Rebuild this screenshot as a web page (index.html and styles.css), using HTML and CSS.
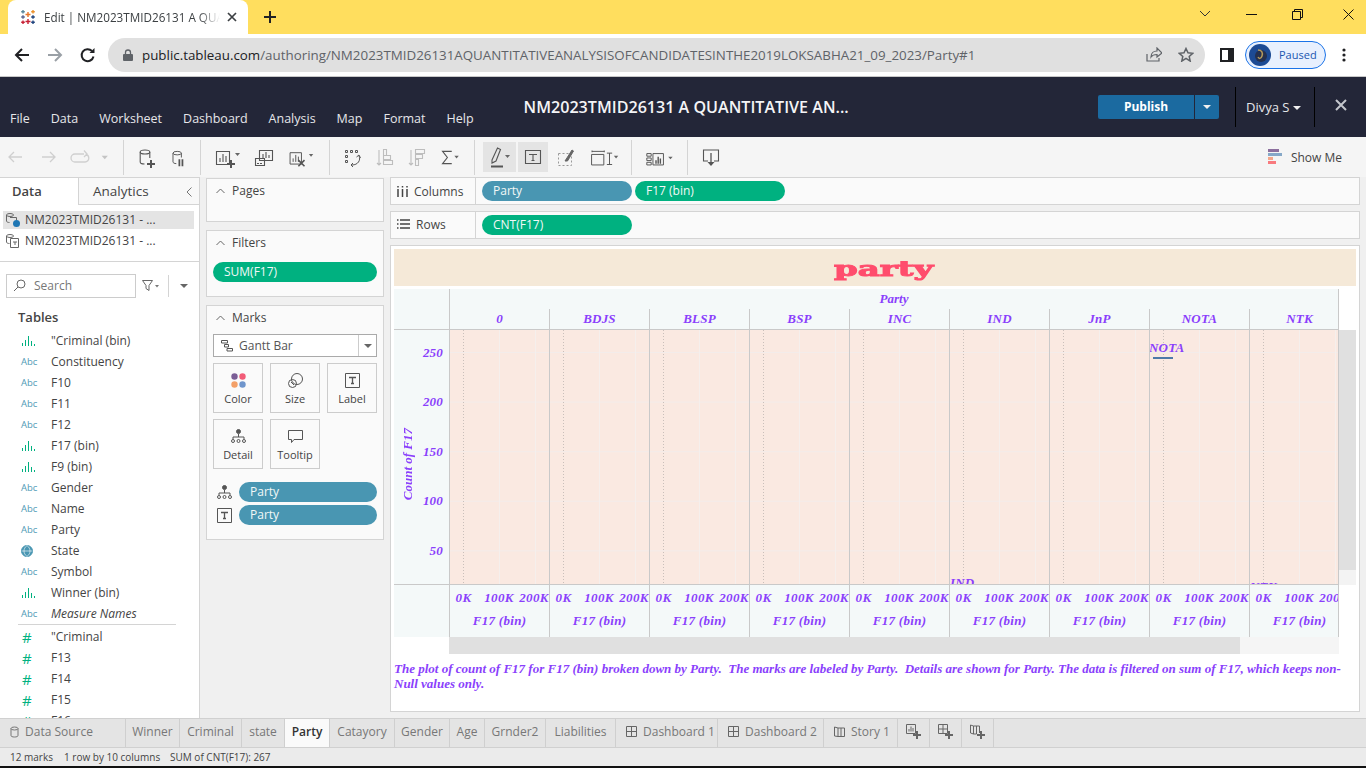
FILE: index.html
```html
<!DOCTYPE html>
<html lang="en">
<head>
    <meta charset="UTF-8">
    <meta name="viewport" content="width=device-width, initial-scale=1.0">
    <title>Edit | NM2023TMID26131</title>
    <link rel="stylesheet" href="styles.css">
</head>
<body>
    <!-- browser chrome -->
    <div class="tabstrip">
        <div class="tab">
            <svg class="favicon" width="16" height="16" viewBox="0 0 16 16" fill="none" stroke-width="1.4">
                <path d="M8 3v5M5.5 5.5h5" stroke="#e8762b"/>
                <path d="M3 1v3.5M1.2 2.700h3.600" stroke="#59879b"/>
                <path d="M13 1v3.5M11.2 2.700h3.600" stroke="#eb912b"/>
                <path d="M3 6.300v3.500M1.200 8h3.600" stroke="#5b6591"/>
                <path d="M13 6.300v3.500M11.200 8h3.600" stroke="#1f447e"/>
                <path d="M8 10v5M5.500 12.500h5" stroke="#c72035"/>
                <path d="M3 11.500v3.500M1.200 13.200h3.600" stroke="#c72035"/>
                <path d="M13 11.500v3.500M11.200 13.200h3.600" stroke="#1f447e"/>
            </svg>
            <span class="tab-title">Edit | NM2023TMID26131 A QUANTITATIVE</span>
            <svg class="tab-close" width="10" height="10" viewBox="0 0 10 10" stroke="#3c4043" stroke-width="1.7"><path d="M1 1l8 8M9 1l-8 8"/></svg>
        </div>
        <svg class="new-tab" width="12" height="12" viewBox="0 0 12 12" stroke="#202124" stroke-width="2"><path d="M6 0v12M0 6h12"/></svg>
        <div class="win-btns">
            <svg width="12" height="8" viewBox="0 0 12 8" fill="none" stroke="#333"><path d="M1 1l5 5 5-5"/></svg>
            <svg width="11" height="11" viewBox="0 0 11 11" stroke="#111"><path d="M0 5.500h11"/></svg>
            <svg width="11" height="11" viewBox="0 0 11 11" fill="none" stroke="#111"><path d="M.5 2.500h8v8h-8zM2.500 2.500v-2h8v8h-2"/></svg>
            <svg width="11" height="11" viewBox="0 0 11 11" stroke="#111"><path d="M.5.500l10 10M10.500.500l-10 10"/></svg>
        </div>
    </div>

    <div class="addrbar">
        <svg class="nav-icon" width="16" height="16" viewBox="0 0 16 16" fill="none" stroke="#202124" stroke-width="2"><path d="M15 8H2M8 2L2 8l6 6"/></svg>
        <svg class="nav-icon" width="16" height="16" viewBox="0 0 16 16" fill="none" stroke="#9aa0a6" stroke-width="2"><path d="M1 8h13M8 2l6 6-6 6"/></svg>
        <svg class="nav-icon" width="16" height="16" viewBox="0 0 16 16" fill="none" stroke="#202124" stroke-width="2"><path d="M13.500 9.500A6 6 0 1 1 12 4"/><path d="M14.500 1v5h-5z" fill="#202124" stroke="none"/></svg>
        <div class="omnibox">
            <svg width="10" height="12" viewBox="0 0 10 12" fill="#5f6368"><path d="M1 5h8a1 1 0 0 1 1 1v5a1 1 0 0 1-1 1H1a1 1 0 0 1-1-1V6a1 1 0 0 1 1-1z"/><path d="M2.500 5V3.500a2.500 2.500 0 0 1 5 0V5" fill="none" stroke="#5f6368" stroke-width="1.300"/></svg>
            <span class="url"><b>public.tableau.com</b>/authoring/NM2023TMID26131AQUANTITATIVEANALYSISOFCANDIDATESINTHE2019LOKSABHA21_09_2023/Party#1</span>
            <svg class="share" width="16" height="15" viewBox="0 0 16 15" fill="none" stroke="#5f6368" stroke-width="1.200"><path d="M1 7v7h12v-3"/><path d="M5 10c0-4 3-6 6-6V1l5 5-5 4V7.500c-3 0-5 1-6 2.500z"/></svg>
            <svg class="star" width="16" height="15" viewBox="0 0 16 15" fill="none" stroke="#5f6368" stroke-width="1.500"><path d="M8 1.500l2 4.300 4.700.500-3.500 3.200 1 4.600L8 11.300l-4.200 2.800 1-4.600L1.300 6.300 6 5.800z"/></svg>
        </div>
        <svg class="side-panel" width="14" height="14" viewBox="0 0 14 14"><path d="M0 0h14v14H0z" fill="#202124"/><path d="M2 2h6v10H2z" fill="#fff"/></svg>
        <div class="profile">
            <svg width="22" height="22" viewBox="0 0 22 22"><circle cx="11" cy="11" r="11" fill="#1c4a94"/><circle cx="12" cy="12" r="6" fill="#24304f"/><path d="M9 6c4 0 5 3 4 6s-3 3-4 1" fill="none" stroke="#b59a5a" stroke-width="1.500"/></svg>
            <span>Paused</span>
        </div>
        <svg class="kebab" width="4" height="14" viewBox="0 0 4 14" fill="#202124"><circle cx="2" cy="2" r="1.600"/><circle cx="2" cy="7" r="1.600"/><circle cx="2" cy="12" r="1.600"/></svg>
    </div>

    <!-- tableau header -->
    <header class="hdr">
        <nav class="menu">
            <span>File</span><span>Data</span><span>Worksheet</span><span>Dashboard</span><span>Analysis</span><span>Map</span><span>Format</span><span>Help</span>
        </nav>
        <div class="wb-title">NM2023TMID26131 A QUANTITATIVE AN...</div>
        <div class="hdr-right">
            <div class="publish"><span class="publish-main">Publish</span><span class="publish-caret"><i class="caret caret-white"></i></span></div>
            <div class="user">Divya S <i class="caret caret-white"></i></div>
            <svg class="hdr-close" width="12" height="12" viewBox="0 0 12 12" stroke="#c4c6cc" stroke-width="2"><path d="M1 1l10 10M11 1L1 11"/></svg>
        </div>
    </header>

    <!-- toolbar -->
    <div class="tools">
        <svg width="33" height="40" viewBox="0 0 33 40" fill="none" stroke="#cfcfcf" stroke-width="1.300"><path d="M22 20H9M14 15l-5 5 5 5"/></svg>
        <svg width="31" height="40" viewBox="0 0 31 40" fill="none" stroke="#cfcfcf" stroke-width="1.300"><path d="M9 20h13M17 15l5 5-5 5"/></svg>
        <svg width="33" height="40" viewBox="0 0 33 40" fill="none" stroke="#cfcfcf" stroke-width="1.300"><path d="M20 17h-9a3.800 3.800 0 0 0 0 8h10a3.800 3.800 0 0 0 3.800-4c0-1.500-1-3-2.800-3.500M20 13.500l3 3.500-3 3"/></svg>
        <svg class="group-end" width="27" height="40" viewBox="0 0 27 40" fill="#c4c4c4"><path d="M4 18h7l-3.500 4z"/></svg>

        <svg width="40" height="40" viewBox="0 0 40 40" fill="none" stroke="#555" stroke-width="1.100"><ellipse cx="21" cy="15" rx="4.800" ry="2"/><path d="M16.200 15v10c0 1 1.500 2 4.300 2M25.800 15v6"/><path d="M27 23v8M23 27h8" stroke-width="2"/></svg>
        <svg class="group-end" width="37" height="40" viewBox="0 0 37 40" fill="none" stroke="#555" stroke-width="1.100"><ellipse cx="13" cy="15" rx="4.800" ry="2"/><path d="M8.200 15v10c0 1 1.500 2 3.800 2M17.800 15v5"/><path d="M15.500 22v8M19 22v8" stroke-width="2"/></svg>

        <svg width="45" height="40" viewBox="0 0 45 40" fill="none" stroke="#555" stroke-width="1.100"><path d="M15.500 14.500h13v13h-13zM19 25v-4M22 25v-8M25 25v-6"/><path d="M30 23v8M26 27h8" stroke-width="2"/><path d="M34 16h5l-2.500 3z" fill="#666" stroke="none"/></svg>
        <svg width="34" height="40" viewBox="0 0 34 40" fill="none" stroke="#555" stroke-width="1.100"><path d="M13.500 13.500h13v10h-13zM9.500 21.500h9v7h-9zM17 21v-4M20 21v-6M23 21v-3"/><path d="M12 26v1M15 26v1" stroke-width="2"/></svg>
        <svg class="group-end" width="50" height="40" viewBox="0 0 50 40" fill="none" stroke="#555" stroke-width="1.100"><path d="M8.500 14.500h13v13h-13zM12 25v-4M15 25v-8M18 25v-6"/><path d="M18 23l7 7M25 23l-7 7" stroke-width="1.800"/><path d="M30 16h5l-2.500 3z" fill="#666" stroke="none"/></svg>

        <svg width="38" height="40" viewBox="0 0 38 40" fill="none" stroke="#555" stroke-width="1"><path d="M15.500 13.500h2v2h-2zM20.500 13.500h2v2h-2zM25.500 13.500h2v2h-2zM15.500 18.500h2v2h-2zM15.500 23.500h2v2h-2z"/><path d="M29 19c2 4-1 9-7 9M30.500 21l-1.500-3-2.500 2M23 26l-2 2 2 2"/></svg>
        <svg width="32" height="40" viewBox="0 0 32 40" fill="none" stroke="#bdbdbd" stroke-width="1.100"><path d="M11 13v15M9 26l2 2 2-2"/><path d="M15.500 12.500h3v6h-3zM15.500 18.500h7v4h-7zM15.500 23.500h9v4h-9z"/></svg>
        <svg width="33" height="40" viewBox="0 0 33 40" fill="none" stroke="#bdbdbd" stroke-width="1.100"><path d="M11 13v15M9 26l2 2 2-2"/><path d="M15.500 12.500h9v4h-9zM15.500 17.500h7v4h-7zM15.500 22.500h3v6h-3z"/></svg>
        <svg class="group-end" width="42" height="40" viewBox="0 0 42 40" fill="none" stroke="#555" stroke-width="1.300"><path d="M19 13H8.500l5.500 7-5.500 7H19"/><path d="M22 18h5l-2.500 3z" fill="#666" stroke="none"/></svg>

        <span class="tool-on first-on">
            <svg width="33" height="30" viewBox="0 0 33 30" fill="none" stroke="#555" stroke-width="1.100"><path d="M9 18l5.500-12 3 1.500L13 19l-4 2z"/><path d="M8 24.500h12" stroke-width="2"/><path d="M22 13h5l-2.500 3z" fill="#666" stroke="none"/></svg>
        </span>
        <span class="tool-on">
            <svg width="30" height="30" viewBox="0 0 30 30" fill="none" stroke="#555" stroke-width="1.100"><path d="M7.500 8.500h15v13h-15z"/><path d="M11 12.500h8M15 12.500v6M13.500 18.500h3"/></svg>
        </span>
        <svg width="40" height="40" viewBox="0 0 40 40" fill="none" stroke="#999"><path d="M10.500 16.500h13v12h-13z" stroke-dasharray="2 2"/><path d="M17 24l7-11 1.500 1-6 10z" fill="#666" stroke="#666"/></svg>
        <svg class="group-end" width="44" height="40" viewBox="0 0 44 40" fill="none" stroke="#555" stroke-width="1.100"><path d="M2 14v-2M2 13h14M16 14v-2M1.500 16.500h14v12h-14zM19 15h6M22 15v13M19 28h6"/><path d="M27 18h5l-2.500 3z" fill="#666" stroke="none"/></svg>

        <svg class="group-end" width="56" height="40" viewBox="0 0 56 40" fill="none" stroke="#555" stroke-width="1.100"><path d="M13.500 15.500h5v3h-5zM13.500 20.500h5v3h-5zM13.500 25.500h5v3h-5zM20.500 15.500h12v13h-12z"/><path d="M24 27v-4M26.500 27v-8M29 27v-6" stroke-width="1.600"/><path d="M38 19h5l-2.500 3z" fill="#666" stroke="none"/></svg>

        <svg width="40" height="40" viewBox="0 0 40 40" fill="none" stroke="#555" stroke-width="1.100"><path d="M20 24h-4.500v-11h15v11H26"/><path d="M23 16v12" stroke-width="1.300"/><path d="M19.500 25l3.500 4 3.500-4z" fill="#555" stroke="none"/></svg>

        <div class="show-me">
            <svg width="14" height="16" viewBox="0 0 14 16"><path d="M0 0h11v3H0z" fill="#8c6f9e"/><path d="M0 4h14v3H0z" fill="#86a8c8"/><path d="M0 8h5v3H0z" fill="#f3a68a"/><path d="M0 12h8v3H0z" fill="#f87a7e"/></svg>
            <span>Show Me</span>
        </div>
    </div>

    <div class="main">
        <!-- data pane -->
        <aside class="data-pane">
            <div class="pane-tabs">
                <div class="pane-tab active">Data</div>
                <div class="pane-tab">Analytics<svg class="collapse" width="6" height="10" viewBox="0 0 6 10" fill="none" stroke="#777"><path d="M5.500.500L1 5l4.500 4.500"/></svg></div>
            </div>
            <div class="sources">
                <div class="source on">
                    <svg width="16" height="16" viewBox="0 0 16 16" fill="none" stroke="#666"><ellipse cx="5" cy="3" rx="3.500" ry="1.500"/><path d="M1.500 3v6c0 1 1.500 1.500 3 1.500M5 5.500h6.500v3"/><circle cx="11.500" cy="11.500" r="3.500" fill="#1f77b4" stroke="none"/></svg>
                    <span>NM2023TMID26131 - ...</span>
                </div>
                <div class="source">
                    <svg width="16" height="16" viewBox="0 0 16 16" fill="none" stroke="#666"><ellipse cx="5" cy="3" rx="3.500" ry="1.500"/><path d="M1.500 3v6c0 1 1.500 1.500 3 1.500M5.500 5.500h8v9h-8zM8 9h4M10 9v3"/></svg>
                    <span>NM2023TMID26131 - ...</span>
                </div>
            </div>
            <div class="search-row">
                <div class="search">
                    <svg width="13" height="13" viewBox="0 0 13 13" fill="none" stroke="#666"><circle cx="8" cy="5" r="4"/><path d="M5 8l-4 4"/></svg>
                    <span>Search</span>
                </div>
                <svg class="funnel" width="18" height="12" viewBox="0 0 18 12" fill="none" stroke="#666"><path d="M.500.500h10L7 5.500v5l-3-2v-3z"/><path d="M13 5h4l-2 2.500z" fill="#777" stroke="none"/></svg>
                <i class="search-sep"></i>
                <i class="caret caret-grey"></i>
            </div>
            <div class="tables-title">Tables</div>
            <ul class="fields">
                <li><svg class="bars" width="14" height="10" viewBox="0 0 14 10" stroke="#00b180"><path d="M1.500 10V7M4.500 10V4M7.500 10V0M10.500 10V5M13.500 10V8"/></svg><span>"Criminal (bin)</span></li>
                <li><em class="abc">Abc</em><span>Constituency</span></li>
                <li><em class="abc">Abc</em><span>F10</span></li>
                <li><em class="abc">Abc</em><span>F11</span></li>
                <li><em class="abc">Abc</em><span>F12</span></li>
                <li><svg class="bars" width="14" height="10" viewBox="0 0 14 10" stroke="#00b180"><path d="M1.500 10V7M4.500 10V4M7.500 10V0M10.500 10V5M13.500 10V8"/></svg><span>F17 (bin)</span></li>
                <li><svg class="bars" width="14" height="10" viewBox="0 0 14 10" stroke="#00b180"><path d="M1.500 10V7M4.500 10V4M7.500 10V0M10.500 10V5M13.500 10V8"/></svg><span>F9 (bin)</span></li>
                <li><em class="abc">Abc</em><span>Gender</span></li>
                <li><em class="abc">Abc</em><span>Name</span></li>
                <li><em class="abc">Abc</em><span>Party</span></li>
                <li><svg class="bars globe" width="12" height="12" viewBox="0 0 12 12" fill="none" stroke="#4996b2"><circle cx="6" cy="6" r="5.500" fill="#4996b2"/><path d="M.500 6h11M6 .500c-4 3-4 8 0 11M6 .500c4 3 4 8 0 11" stroke="#fff" stroke-width=".6"/></svg><span>State</span></li>
                <li><em class="abc">Abc</em><span>Symbol</span></li>
                <li><svg class="bars" width="14" height="10" viewBox="0 0 14 10" stroke="#00b180"><path d="M1.500 10V7M4.500 10V4M7.500 10V0M10.500 10V5M13.500 10V8"/></svg><span>Winner (bin)</span></li>
                <li class="measure-names"><em class="abc">Abc</em><span>Measure Names</span></li>
                <li class="num"><em class="hash">#</em><span>"Criminal</span></li>
                <li><em class="hash">#</em><span>F13</span></li>
                <li><em class="hash">#</em><span>F14</span></li>
                <li><em class="hash">#</em><span>F15</span></li>
                <li><em class="hash">#</em><span>F16</span></li>
            </ul>
        </aside>

        <!-- pages, filters, marks -->
        <section class="cards">
            <div class="card card-pages">
                <div class="card-title"><svg width="9" height="6" viewBox="0 0 9 6" fill="none" stroke="#666"><path d="M.500 5L4.500 1l4 4"/></svg>Pages</div>
            </div>
            <div class="card card-filters">
                <div class="card-title"><svg width="9" height="6" viewBox="0 0 9 6" fill="none" stroke="#666"><path d="M.500 5L4.500 1l4 4"/></svg>Filters</div>
                <div class="pill green">SUM(F17)</div>
            </div>
            <div class="card card-marks">
                <div class="card-title"><svg width="9" height="6" viewBox="0 0 9 6" fill="none" stroke="#666"><path d="M.500 5L4.500 1l4 4"/></svg>Marks</div>
                <div class="mark-select">
                    <svg width="12" height="12" viewBox="0 0 12 12" fill="none" stroke="#555"><path d="M.500.500h6v2.500h-6zM3.500 4.500h4v2.500h-4zM6 8.500h5.500V11H6z"/></svg>
                    <span>Gantt Bar</span>
                    <b class="select-arrow"><i class="caret caret-grey"></i></b>
                </div>
                <div class="mark-grid">
                    <div class="mark-btn">
                        <svg width="15" height="15" viewBox="0 0 15 15"><circle cx="3.500" cy="3.500" r="3.200" fill="#7b5e96"/><circle cx="11.500" cy="3.500" r="3.200" fill="#f25c78"/><circle cx="3.500" cy="11.500" r="3.200" fill="#f3a068"/><circle cx="11.500" cy="11.500" r="3.200" fill="#6f95cc"/></svg>
                        <span>Color</span>
                    </div>
                    <div class="mark-btn">
                        <svg width="15" height="15" viewBox="0 0 15 15" fill="none" stroke="#555"><circle cx="9" cy="6" r="5.500"/><circle cx="4.500" cy="10.500" r="4"/><path d="M3 9l3 3"/></svg>
                        <span>Size</span>
                    </div>
                    <div class="mark-btn">
                        <svg width="15" height="15" viewBox="0 0 15 15" fill="none" stroke="#555"><path d="M.500.500h14v14H.500z"/><path d="M4 4.500h7M7.500 4.500v6M6 10.500h3" stroke-width="1.300"/></svg>
                        <span>Label</span>
                    </div>
                    <div class="mark-btn">
                        <svg width="15" height="15" viewBox="0 0 15 15" fill="none" stroke="#555"><circle cx="7.500" cy="2.500" r="2" fill="#555"/><path d="M7.500 5v3M2 10V8h11v2"/><circle cx="2" cy="12" r="1.500"/><circle cx="7.500" cy="12" r="1.500"/><circle cx="13" cy="12" r="1.500"/></svg>
                        <span>Detail</span>
                    </div>
                    <div class="mark-btn">
                        <svg width="15" height="15" viewBox="0 0 15 15" fill="none" stroke="#555"><path d="M.500 1.500h14v9H6L3.500 13.500v-3h-3z"/></svg>
                        <span>Tooltip</span>
                    </div>
                </div>
                <div class="mark-row">
                    <svg width="15" height="15" viewBox="0 0 15 15" fill="none" stroke="#555"><circle cx="7.500" cy="2.500" r="2" fill="#555"/><path d="M7.500 5v3M2 10V8h11v2"/><circle cx="2" cy="12" r="1.500"/><circle cx="7.500" cy="12" r="1.500"/><circle cx="13" cy="12" r="1.500"/></svg>
                    <div class="pill blue">Party</div>
                </div>
                <div class="mark-row">
                    <svg width="15" height="15" viewBox="0 0 15 15" fill="none" stroke="#555"><path d="M.500.500h14v14H.500z"/><path d="M4 4.500h7M7.500 4.500v6M6 10.500h3" stroke-width="1.300"/></svg>
                    <div class="pill blue">Party</div>
                </div>
            </div>
        </section>

        <!-- sheet -->
        <section class="sheet">
            <div class="shelf shelf-cols">
                <div class="shelf-label">
                    <svg width="11" height="11" viewBox="0 0 11 11" stroke="#444" stroke-width="1.500"><path d="M1 3v8M5.500 3v8M10 3v8"/><path d="M1 0v1.500M5.500 0v1.500M10 0v1.500"/></svg>
                    Columns
                </div>
                <div class="pill blue shelf-pill">Party</div>
                <div class="pill green shelf-pill">F17 (bin)</div>
            </div>
            <div class="shelf shelf-rows">
                <div class="shelf-label">
                    <svg width="13" height="10" viewBox="0 0 13 10" stroke="#444" stroke-width="1.500"><path d="M3 1h10M3 5h10M3 9h10M0 1h1.500M0 5h1.500M0 9h1.500"/></svg>
                    Rows
                </div>
                <div class="pill green shelf-pill">CNT(F17)</div>
            </div>

            <div class="viz">
                <div class="viz-title"><span>party</span></div>
                <div class="chart">
                    <div class="corner"></div>
                    <div class="col-head">
                        <div class="party-row">Party</div>
                        <div class="head-row">
                            <div class="head-cell">0</div>
                            <div class="head-cell">BDJS</div>
                            <div class="head-cell">BLSP</div>
                            <div class="head-cell">BSP</div>
                            <div class="head-cell">INC</div>
                            <div class="head-cell">IND</div>
                            <div class="head-cell">JnP</div>
                            <div class="head-cell">NOTA</div>
                            <div class="head-cell">NTK</div>
                        </div>
                    </div>
                    <div class="blank"></div>

                    <div class="y-axis">
                        <div class="y-title"><span>Count of F17</span></div>
                        <div class="y-ticks">
                            <span>250</span><span>200</span><span>150</span><span>100</span><span>50</span>
                        </div>
                    </div>
                    <div class="plot">
                        <div class="pane"></div>
                        <div class="pane"></div>
                        <div class="pane"></div>
                        <div class="pane"></div>
                        <div class="pane"></div>
                        <div class="pane"><span class="mark-label ind-label">IND</span></div>
                        <div class="pane"></div>
                        <div class="pane"><span class="mark-label nota-label">NOTA</span><i class="gantt"></i></div>
                        <div class="pane"><span class="mark-label ntk-label">NTK</span></div>
                    </div>
                    <div class="v-scroll"><i></i></div>

                    <div class="x-corner"></div>
                    <div class="x-axes">
                        <div class="x-axis"><div class="x-ticks"><span>0K</span><span>100K</span><span>200K</span></div><div class="x-title">F17 (bin)</div></div>
                        <div class="x-axis"><div class="x-ticks"><span>0K</span><span>100K</span><span>200K</span></div><div class="x-title">F17 (bin)</div></div>
                        <div class="x-axis"><div class="x-ticks"><span>0K</span><span>100K</span><span>200K</span></div><div class="x-title">F17 (bin)</div></div>
                        <div class="x-axis"><div class="x-ticks"><span>0K</span><span>100K</span><span>200K</span></div><div class="x-title">F17 (bin)</div></div>
                        <div class="x-axis"><div class="x-ticks"><span>0K</span><span>100K</span><span>200K</span></div><div class="x-title">F17 (bin)</div></div>
                        <div class="x-axis"><div class="x-ticks"><span>0K</span><span>100K</span><span>200K</span></div><div class="x-title">F17 (bin)</div></div>
                        <div class="x-axis"><div class="x-ticks"><span>0K</span><span>100K</span><span>200K</span></div><div class="x-title">F17 (bin)</div></div>
                        <div class="x-axis"><div class="x-ticks"><span>0K</span><span>100K</span><span>200K</span></div><div class="x-title">F17 (bin)</div></div>
                        <div class="x-axis"><div class="x-ticks"><span>0K</span><span>100K</span><span>200K</span></div><div class="x-title">F17 (bin)</div></div>
                    </div>
                    <div class="blank-white"></div>

                    <div class="blank-white"></div>
                    <div class="h-scroll"><i></i></div>
                    <div class="blank-white"></div>
                </div>
                <p class="caption">The plot of count of F17 for F17 (bin) broken down by Party.&nbsp; The marks are labeled by Party.&nbsp; Details are shown for Party. The data is filtered on sum of F17, which keeps non-<br>Null values only.</p>
            </div>
        </section>
    </div>

    <!-- sheet tabs -->
    <div class="sheet-tabs">
        <div class="stab stab-icon w-source">
            <svg width="9" height="12" viewBox="0 0 9 12" fill="none" stroke="#777"><ellipse cx="4.500" cy="2.500" rx="3.500" ry="1.500"/><path d="M1 2.500v7c0 1 1.500 1.500 3.500 1.500S8 10.500 8 9.500v-7"/></svg>
            Data Source
        </div>
        <div class="stab w-winner">Winner</div>
        <div class="stab w-criminal">Criminal</div>
        <div class="stab w-state">state</div>
        <div class="stab w-party current">Party</div>
        <div class="stab w-cat">Catayory</div>
        <div class="stab w-gender">Gender</div>
        <div class="stab w-age">Age</div>
        <div class="stab w-grnder">Grnder2</div>
        <div class="stab w-liab">Liabilities</div>
        <div class="stab stab-icon w-dash1">
            <svg width="11" height="11" viewBox="0 0 11 11" fill="none" stroke="#666"><path d="M.500.500h10v10H.500zM5.500.500v10M.500 5.500h10"/></svg>
            Dashboard 1
        </div>
        <div class="stab stab-icon w-dash2">
            <svg width="11" height="11" viewBox="0 0 11 11" fill="none" stroke="#666"><path d="M.500.500h10v10H.500zM5.500.500v10M.500 5.500h10"/></svg>
            Dashboard 2
        </div>
        <div class="stab stab-icon w-story">
            <svg width="11" height="11" viewBox="0 0 11 11" fill="none" stroke="#666"><path d="M.500 1l3.500 1v8.500L.500 10zM4 2h6.500v8.500H4M7 2v8.500"/></svg>
            Story 1
        </div>
        <div class="stab w-add">
            <svg width="15" height="15" viewBox="0 0 15 15" fill="none" stroke="#666"><path d="M.500.500h9v9h-9zM3 7.500V5M5 7.500V2.500M7 7.500V4"/><path d="M11 7v8M7 11h8" stroke-width="2"/></svg>
        </div>
        <div class="stab w-add">
            <svg width="15" height="15" viewBox="0 0 15 15" fill="none" stroke="#666"><path d="M.500.500h9v9h-9zM5 .500v9M.500 5h9"/><path d="M11 7v8M7 11h8" stroke-width="2"/></svg>
        </div>
        <div class="stab w-add">
            <svg width="15" height="15" viewBox="0 0 15 15" fill="none" stroke="#666"><path d="M.500 1l3 1v8l-3-1zM3.500 2h6v7M6.500 2v8h-3"/><path d="M11 7v8M7 11h8" stroke-width="2"/></svg>
        </div>
    </div>
    <div class="status">
        <span class="st-marks">12 marks</span>
        <span class="st-rows">1 row by 10 columns</span>
        <span>SUM of CNT(F17): 267</span>
    </div>
    <div class="taskbar-edge"></div>
</body>
</html>
```

FILE: styles.css
```css
* {
    box-sizing: border-box;
}

html, body {
    margin: 0;
    height: 768px;
    overflow: hidden;
}

body {
    font-family: "Open Sans", "Noto Sans", sans-serif;
    font-size: 12px;
    color: #333;
    background: #f0f0f0;
}

svg {
    display: block;
    flex: none;
}

/* browser chrome */
.tabstrip {
    height: 34px;
    background: #ffde5e;
    display: flex;
    align-items: flex-end;
    padding-left: 8px;
}

.tab {
    width: 240px;
    height: 34px;
    background: #fff;
    border-radius: 8px 8px 0 0;
    display: flex;
    align-items: center;
    padding: 0 11px 0 12px;
}

.tab-title {
    flex: 1;
    margin-left: 8px;
    font-size: 11.7px;
    white-space: nowrap;
    overflow: hidden;
    color: #3c4043;
    -webkit-mask-image: linear-gradient(to right, #000 88%, transparent);
    mask-image: linear-gradient(to right, #000 88%, transparent);
}

.tab-close {
    margin-left: 7px;
}

.new-tab {
    align-self: center;
    margin-left: 16px;
}

.win-btns {
    margin-left: auto;
    align-self: flex-start;
    height: 28px;
    display: flex;
    align-items: center;
    padding-right: 12px;
}

.win-btns svg:nth-child(1) {
    margin-right: 35px;
}

.win-btns svg:nth-child(2) {
    margin-right: 35px;
}

.win-btns svg:nth-child(3) {
    margin-right: 40px;
}

.addrbar {
    height: 43px;
    background: #fff;
    border-bottom: 1px solid #c8c8c8;
    display: flex;
    align-items: center;
    padding: 0 0 1px 14px;
}

.nav-icon {
    margin-right: 17px;
}

.omnibox {
    width: 1097px;
    height: 34px;
    margin-left: -5px;
    background: #e0e0e0;
    border-radius: 17px;
    display: flex;
    align-items: center;
    padding-left: 15px;
}

.url {
    margin-left: 9px;
    font-size: 13.35px;
    color: #5f6368;
    white-space: nowrap;
    width: 996px;
}

.url b {
    font-weight: 400;
    color: #202124;
}

.share {
    margin-left: 8px;
}

.star {
    margin-left: 16px;
}

.side-panel {
    margin-left: 15px;
}

.profile {
    width: 81px;
    height: 28px;
    margin-left: 11px;
    border: 1px solid #1a73e8;
    border-radius: 14px;
    background: #e8f0fe;
    display: flex;
    align-items: center;
    padding-left: 3px;
    color: #1a56b0;
    font-size: 11px;
}

.profile span {
    margin-left: 8px;
}

.kebab {
    margin-left: 16px;
}

/* tableau header */
.hdr {
    height: 60px;
    background: #232638;
    display: flex;
    color: #e6e7ea;
}

.menu {
    display: flex;
    gap: 21px;
    padding: 33px 0 0 10px;
    font-size: 12.5px;
    line-height: 18px;
}

.wb-title {
    margin-left: 50px;
    padding-top: 19px;
    font-size: 16.1px;
    line-height: 22px;
    font-weight: 600;
    color: #f4f4f6;
    white-space: nowrap;
}

.hdr-right {
    margin-left: auto;
    display: flex;
    align-items: flex-start;
}

.publish {
    display: flex;
    margin-top: 18px;
    height: 24px;
    margin-right: 16px;
}

.publish-main {
    width: 96px;
    background: #1b6aa0;
    border-radius: 2px 0 0 2px;
    text-align: center;
    font-weight: 700;
    line-height: 23px;
    color: #fff;
}

.publish-caret {
    width: 24px;
    margin-left: 1px;
    background: #1b6aa0;
    border-radius: 0 2px 2px 0;
    display: flex;
    align-items: center;
    justify-content: center;
}

.caret {
    display: inline-block;
    width: 0;
    height: 0;
    border-style: solid;
    border-width: 4px 4px 0;
    border-color: transparent;
}

.caret-white {
    border-top-color: #f0f0f0;
}

.caret-grey {
    border-top-color: #666;
}

.user {
    width: 80px;
    height: 40px;
    margin-top: 10px;
    border-left: 1px solid #000;
    border-right: 1px solid #000;
    padding-left: 10px;
    font-size: 13px;
    line-height: 40px;
    white-space: nowrap;
}

.user .caret {
    vertical-align: 2px;
}

.hdr-close {
    margin: 22px 19px 0 20px;
}

/* toolbar */
.tools {
    height: 40px;
    background: #f5f5f5;
    display: flex;
    align-items: center;
}

.group-end {
    border-right: 1px solid #d4d4d4;
    height: 35px;
}

.tool-on {
    width: 33px;
    height: 30px;
    background: #e4e4e4;
}

.first-on {
    margin-left: 8px;
    margin-right: 2px;
}

.tool-on + .tool-on {
    width: 30px;
}

.show-me {
    margin-left: auto;
    padding-right: 24px;
    display: flex;
    align-items: center;
    gap: 9px;
    color: #444;
}

/* main area */
.main {
    height: 541px;
    display: flex;
}

.data-pane {
    width: 200px;
    background: #fff;
    border-right: 1px solid #d4d4d4;
    overflow: hidden;
    flex: none;
}

.pane-tabs {
    display: flex;
    height: 28px;
    border-top: 1px solid #d4d4d4;
}

.pane-tab {
    flex: 1;
    position: relative;
    background: #f8f8f8;
    border-bottom: 1px solid #d4d4d4;
    padding-left: 14px;
    font-size: 13.5px;
    line-height: 27px;
    color: #444;
}

.pane-tab.active {
    flex: 0 0 79px;
    background: #fff;
    border-bottom: none;
    border-right: 1px solid #d4d4d4;
    padding-left: 12px;
    font-size: 13px;
    font-weight: 600;
}

.collapse {
    position: absolute;
    right: 7px;
    top: 9px;
}

.sources {
    height: 57px;
    padding: 6px 5px 0 3px;
    border-bottom: 1px solid #d4d4d4;
}

.source {
    height: 18px;
    margin-bottom: 3px;
    display: flex;
    align-items: center;
    gap: 4px;
    padding-left: 2px;
    color: #444;
    white-space: nowrap;
}

.source span {
    margin-top: -2px;
}

.source.on {
    background: #e4e4e4;
}

.search-row {
    margin-top: 12px;
    padding-left: 6px;
    display: flex;
    align-items: center;
    height: 24px;
}

.search {
    width: 130px;
    height: 24px;
    border: 1px solid #ccc;
    display: flex;
    align-items: center;
    gap: 8px;
    padding: 0 0 2px 6px;
    color: #777;
}

.funnel {
    margin-left: 6px;
}

.search-sep {
    width: 1px;
    height: 22px;
    margin: 0 11px 0 8px;
    background: #d4d4d4;
}

.tables-title {
    margin: 9px 0 0 18px;
    font-size: 13px;
    font-weight: 600;
    line-height: 20px;
    color: #444;
}

.fields {
    list-style: none;
    margin: 3px 0 0;
    padding: 0;
}

.fields li {
    height: 21px;
    display: flex;
    align-items: center;
    color: #444;
    white-space: nowrap;
}

.bars {
    margin: 0 16px 0 21px;
}

.globe {
    margin-right: 18px;
}

.abc {
    width: 30px;
    margin-left: 21px;
    font-style: normal;
    font-size: 9.5px;
    color: #4f9ab6;
}

.hash {
    width: 29px;
    margin-left: 22px;
    font-style: normal;
    font-size: 15px;
    color: #00b180;
}

.measure-names span {
    font-style: italic;
}

.measure-names {
    position: relative;
}

.measure-names::after {
    content: "";
    position: absolute;
    left: 18px;
    width: 158px;
    bottom: -1px;
    border-bottom: 1px solid #d4d4d4;
}

.fields .num {
    margin-top: 2px;
}

/* pages / filters / marks */
.cards {
    width: 190px;
    flex: none;
    padding: 1px 6px 0;
}

.card {
    width: 178px;
    background: #fafafa;
    border: 1px solid #d4d4d4;
    padding: 0 6px;
    margin-bottom: 8px;
}

.card-pages {
    height: 44px;
}

.card-filters {
    height: 67px;
}

.card-marks {
    height: 235px;
}

.card-title {
    height: 23px;
    display: flex;
    align-items: center;
    gap: 7px;
    padding-left: 3px;
    color: #444;
}

.card .card-title + .pill {
    margin-top: 8px;
}

.pill {
    height: 20px;
    border-radius: 10px;
    color: #f2f8f7;
    padding-left: 11px;
    line-height: 20px;
    white-space: nowrap;
}

.pill.blue {
    background: #4996b2;
}

.pill.green {
    background: #00b180;
}

.mark-select {
    height: 23px;
    margin-top: 5px;
    border: 1px solid #aaa;
    background: #fff;
    display: flex;
    align-items: center;
    padding-left: 7px;
    gap: 6px;
    color: #555;
}

.select-arrow {
    margin-left: auto;
    width: 18px;
    height: 21px;
    border-left: 1px solid #ccc;
    display: flex;
    align-items: center;
    justify-content: center;
}

.mark-grid {
    margin-top: 6px;
    display: grid;
    grid-template-columns: repeat(3, 50px);
    grid-auto-rows: 50px;
    gap: 6px 7px;
}

.mark-btn {
    border: 1px solid #ccc;
    background: #fafafa;
    display: flex;
    flex-direction: column;
    align-items: center;
    font-size: 11px;
    padding-top: 9px;
    gap: 3px;
    color: #444;
}

.mark-row {
    display: flex;
    align-items: center;
    gap: 7px;
    padding-left: 4px;
    margin-bottom: 3px;
}

.mark-grid + .mark-row {
    margin-top: 13px;
}

.mark-row .pill {
    flex: 1;
}

/* shelves */
.sheet {
    flex: 1;
    padding-right: 6px;
    min-width: 0;
}

.shelf {
    background: #fafafa;
    border: 1px solid #d4d4d4;
    height: 28px;
    display: flex;
    align-items: center;
    gap: 3px;
    margin-bottom: 6px;
}

.shelf-label {
    width: 85px;
    height: 26px;
    margin-right: 3px;
    border-right: 1px solid #d4d4d4;
    display: flex;
    align-items: center;
    gap: 6px;
    padding-left: 6px;
    color: #444;
}

.shelf-rows .shelf-label {
    padding-bottom: 2px;
}

.shelf-pill {
    width: 150px;
}

/* viz */
.viz {
    height: 467px;
    background: #fff;
    border: 1px solid #d4d4d4;
    padding: 3px 3px 0;
}

.viz-title {
    height: 37px;
    background: #f5e9d8;
    display: flex;
    align-items: center;
    justify-content: center;
    padding-left: 18px;
}

.viz-title span {
    font-family: "DejaVu Serif", serif;
    font-weight: 700;
    font-size: 21px;
    line-height: 24px;
    margin-top: 2px;
    color: #ff4d6d;
    -webkit-text-stroke: 1px #ff4d6d;
    transform: scaleX(1.62);
}

.chart {
    margin-top: 3px;
    display: grid;
    grid-template-columns: 55px 890px 17px;
    grid-template-rows: 41px 255px 52px 17px;
    font-family: "Liberation Serif", serif;
    font-style: italic;
    font-weight: 700;
    font-size: 13px;
    color: #8a3ffc;
}

.corner,
.col-head,
.x-corner,
.x-axes {
    background: #f4f9f9;
}

.corner {
    border-bottom: 1px solid #c9c9c9;
}

.col-head {
    border-bottom: 1px solid #c9c9c9;
}

.party-row {
    height: 20px;
    border-left: 1px solid #c9c9c9;
    border-right: 1px solid #c9c9c9;
    text-align: center;
    line-height: 20px;
}

.head-row {
    height: 20px;
    display: flex;
    overflow: hidden;
    border-right: 1px solid #c9c9c9;
}

.head-cell {
    flex: 0 0 100px;
    border-left: 1px solid #c9c9c9;
    text-align: center;
    line-height: 19px;
    letter-spacing: .2px;
}

.y-axis {
    background: #f4f9f9;
    display: flex;
    border-bottom: 1px solid #c9c9c9;
}

.y-title {
    width: 30px;
    padding-top: 14px;
    display: flex;
    align-items: center;
    justify-content: center;
}

.y-title span {
    writing-mode: vertical-rl;
    transform: rotate(180deg);
    white-space: nowrap;
}

.y-ticks {
    flex: 1;
    display: flex;
    flex-direction: column;
    gap: 29.6px;
    padding: 12.5px 6px 0 0;
    text-align: right;
    letter-spacing: .2px;
}

.y-ticks span {
    height: 20px;
    line-height: 20px;
}

.plot {
    display: flex;
    overflow: hidden;
    border-right: 1px solid #c9c9c9;
    border-bottom: 1px solid #c9c9c9;
}

.pane {
    flex: 0 0 100px;
    position: relative;
    overflow: hidden;
    border-left: 1px solid #c9c9c9;
    background-color: #fae9e1;
    background-image:
        repeating-linear-gradient(#c9bfba 0 1px, transparent 1px 3px),
        linear-gradient(#f5efec, #f5efec),
        linear-gradient(#f5efec, #f5efec),
        linear-gradient(#f3ecea 1px, transparent 1px);
    background-size: 1px 100%, 1px 100%, 1px 100%, 100% 49.6px;
    background-position: 13px 0, 49px 0, 85px 0, 0 22px;
    background-repeat: no-repeat, no-repeat, no-repeat, repeat-y;
}

.mark-label {
    position: absolute;
    white-space: nowrap;
    letter-spacing: .2px;
    line-height: 15px;
}

.nota-label {
    left: -1px;
    top: 10px;
}

.ind-label {
    left: 0;
    top: 245px;
}

.ntk-label {
    left: 0;
    top: 249px;
}

.gantt {
    position: absolute;
    left: 3px;
    top: 27px;
    width: 20px;
    height: 2px;
    background: #4e79a7;
}

.v-scroll {
    background: #f3f3f3;
}

.v-scroll i {
    display: block;
    height: 240px;
    background: #e0e0e0;
}

.blank,
.blank-white {
    background: #fff;
}

.x-axes {
    display: flex;
    overflow: hidden;
    border-right: 1px solid #c9c9c9;
}

.x-axis {
    flex: 0 0 100px;
    border-left: 1px solid #c9c9c9;
}

.x-ticks {
    display: grid;
    grid-template-columns: 27px 44px 28px;
    height: 26px;
    line-height: 26px;
    text-align: center;
    letter-spacing: .3px;
    white-space: nowrap;
}

.x-ticks span:last-child {
    margin-left: -2px;
}

.x-title {
    text-align: center;
    line-height: 19px;
    letter-spacing: .3px;
}

.h-scroll {
    background: #f5f5f5;
}

.h-scroll i {
    display: block;
    width: 791px;
    height: 17px;
    background: #e0e0e0;
}

.caption {
    margin: 7px 0 0;
    font-family: "Liberation Serif", serif;
    font-style: italic;
    font-weight: 700;
    font-size: 13px;
    line-height: 15px;
    color: #8a3ffc;
    white-space: nowrap;
}

/* sheet tabs and status */
.sheet-tabs {
    height: 30px;
    background: #e4e4e4;
    border-top: 1px solid #d0d0d0;
    border-bottom: 1px solid #d0d0d0;
    display: flex;
}

.stab {
    display: flex;
    align-items: center;
    justify-content: center;
    gap: 6px;
    padding-bottom: 3px;
    border-right: 1px solid #cfcfcf;
    color: #777;
    white-space: nowrap;
}

.stab-icon {
    justify-content: flex-start;
    padding-left: 10px;
}

.w-source { width: 126px; }
.w-winner { width: 54px; }
.w-criminal { width: 62px; }
.w-state { width: 43px; }
.w-party { width: 45px; }
.w-cat { width: 65px; }
.w-gender { width: 55px; }
.w-age { width: 35px; }
.w-grnder { width: 61px; }
.w-liab { width: 70px; }
.w-dash1 { width: 102px; }
.w-dash2 { width: 106px; }
.w-story { width: 74px; }
.w-add { width: 32px; }

.current {
    background: #fafafa;
    color: #333;
    font-weight: 600;
}

.status {
    height: 18px;
    background: #ebebeb;
    display: flex;
    align-items: center;
    padding-left: 10px;
    font-size: 10px;
    color: #444;
}

.st-marks {
    width: 54px;
}

.st-rows {
    width: 106px;
}

.taskbar-edge {
    height: 2px;
    background: #111;
}
```
